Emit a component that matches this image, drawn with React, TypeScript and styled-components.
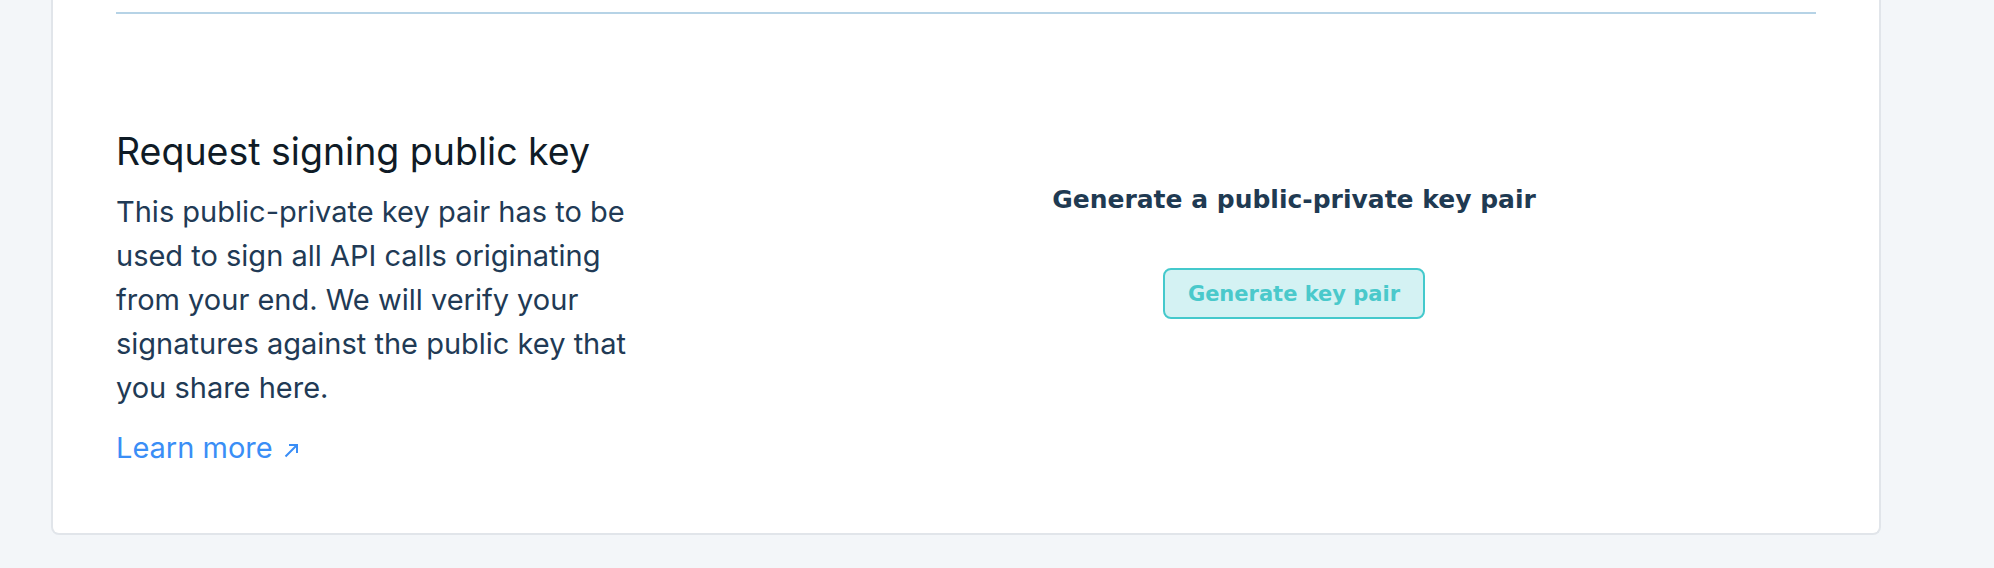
import React from "react"
import styled, {createGlobalStyle} from "styled-components"

const GlobalStyle = createGlobalStyle`
  html, body {
    margin: 0;
    padding: 0;
    background: #f3f6f9;
    font-family: Inter, "Open Sans", sans-serif;
  }
`

const Page = styled.div`
  min-height: 568px;
  box-sizing: border-box;
  padding: 0 113px 33px 51px;
`

const Card = styled.div`
  background: #ffffff;
  border: 2px solid #e1e5ea;
  border-top: none;
  border-radius: 0 0 8px 8px;
  padding: 12px 63px 63px;
`

const Divider = styled.hr`
  margin: 0;
  border: none;
  height: 2px;
  background: #b6d3e6;
`

const Section = styled.section`
  display: grid;
  grid-template-columns: 656px 1fr;
  padding-top: 116px;
`

const Info = styled.div`
  display: flex;
  flex-direction: column;
  align-items: flex-start;
`

const Title = styled.h2`
  margin: 0 0 16px;
  font-size: 37.5px;
  line-height: 44px;
  font-weight: 400;
  color: #0f1b26;
`

const Description = styled.p`
  margin: 0 0 16px;
  max-width: 540px;
  font-size: 29px;
  line-height: 44px;
  color: #213a55;
`

const LearnMore = styled.a`
  display: inline-flex;
  align-items: center;
  gap: 11px;
  font-size: 29px;
  line-height: 44px;
  color: #3a8ef6;
  text-decoration: none;
`

const Arrow = styled.svg`
  width: 15px;
  height: 15px;
  margin-top: 5px;
`

const Generate = styled.div`
  display: flex;
  flex-direction: column;
  align-items: center;
  padding-top: 54px;
  gap: 52px;
  font-family: "DejaVu Sans", Inter, sans-serif;
`

const GenerateTitle = styled.h3`
  margin: 0;
  font-size: 25px;
  line-height: 32px;
  font-weight: 700;
  color: #1f3a52;
`

const Button = styled.button`
  box-sizing: border-box;
  height: 51px;
  padding: 0 23px;
  border: 2px solid #44c9cc;
  border-radius: 8px;
  background: #d4f2f3;
  color: #4ac9cb;
  font-family: inherit;
  font-size: 21px;
  font-weight: 700;
  cursor: pointer;
`

export default function App() {
  return (
    <Page>
      <GlobalStyle />
      <Card>
        <Divider />
        <Section>
          <Info>
            <Title>Request signing public key</Title>
            <Description>
              This public-private key pair has to be used to sign all API calls
              originating from your end. We will verify your signatures against
              the public key that you share here.
            </Description>
            <LearnMore href="#">
              Learn more
              <Arrow viewBox="0 0 15 15" fill="none" stroke="currentColor" strokeWidth="2">
                <path d="M1.5 13.5 L13 2 M5 2 H13 V10" />
              </Arrow>
            </LearnMore>
          </Info>
          <Generate>
            <GenerateTitle>Generate a public-private key pair</GenerateTitle>
            <Button>Generate key pair</Button>
          </Generate>
        </Section>
      </Card>
    </Page>
  )
}
